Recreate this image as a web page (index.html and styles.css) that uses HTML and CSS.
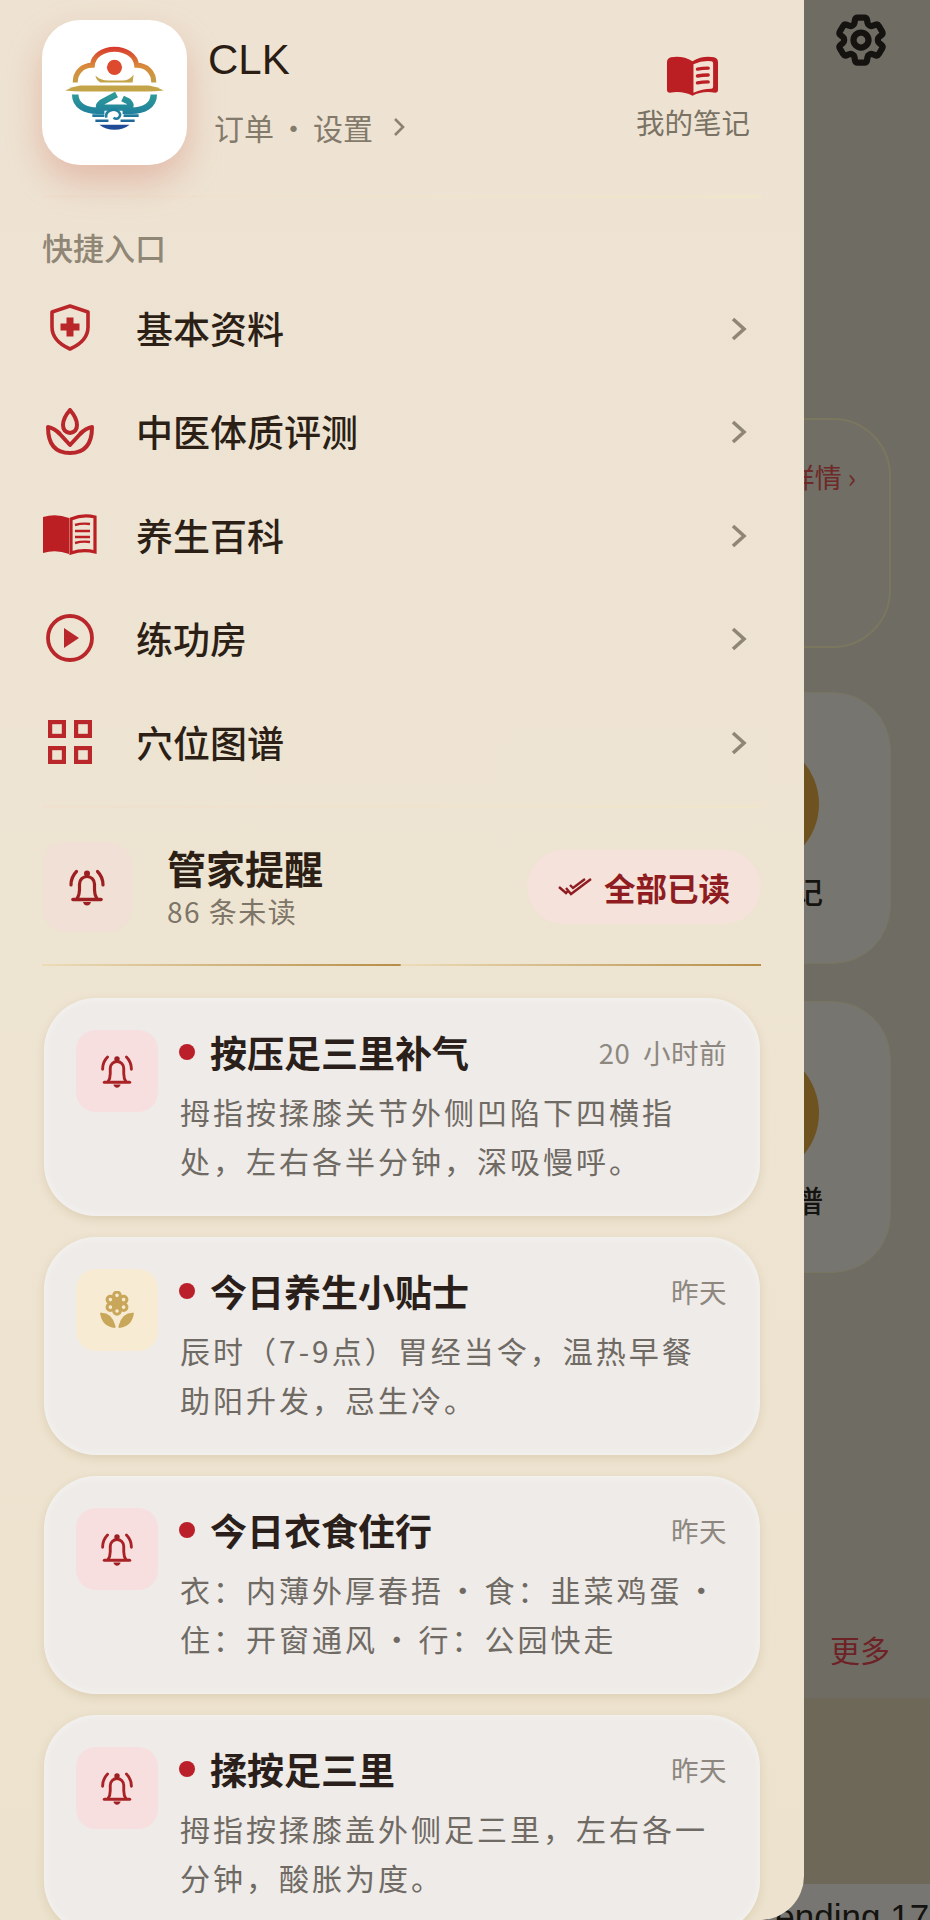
FILE: index.html
```html
<!DOCTYPE html>
<html lang="zh-CN">
<head>
<meta charset="utf-8">
<title>CLK</title>
<link rel="stylesheet" href="styles.css">
</head>
<body>
<div class="screen">

<!-- page behind the drawer -->
<div class="behind">
	<div class="behind-top">
		<svg class="gear" viewBox="0 0 24 24" fill="none" stroke="#14130f" stroke-width="2.5">
			<path d="M9.594 3.94c.09-.542.56-.94 1.11-.94h2.593c.55 0 1.02.398 1.11.94l.213 1.281c.063.374.313.686.645.87.074.04.147.083.22.127.325.196.72.257 1.075.124l1.217-.456a1.125 1.125 0 0 1 1.37.49l1.296 2.247a1.125 1.125 0 0 1-.26 1.431l-1.003.827c-.293.241-.438.613-.43.992a7.723 7.723 0 0 1 0 .255c-.008.378.137.75.43.991l1.004.827c.424.35.534.955.26 1.43l-1.298 2.247a1.125 1.125 0 0 1-1.369.491l-1.217-.456c-.355-.133-.75-.072-1.076.124a6.47 6.47 0 0 1-.22.128c-.331.183-.581.495-.644.869l-.213 1.281c-.09.543-.56.94-1.11.94h-2.594c-.55 0-1.019-.398-1.11-.94l-.213-1.281c-.062-.374-.312-.686-.644-.87a6.52 6.52 0 0 1-.22-.127c-.325-.196-.72-.257-1.076-.124l-1.217.456a1.125 1.125 0 0 1-1.369-.49l-1.297-2.247a1.125 1.125 0 0 1 .26-1.431l1.004-.827c.292-.24.437-.613.43-.991a6.932 6.932 0 0 1 0-.255c.007-.38-.138-.751-.43-.992l-1.004-.827a1.125 1.125 0 0 1-.26-1.43l1.297-2.247a1.125 1.125 0 0 1 1.37-.491l1.216.456c.356.133.751.072 1.076-.124.072-.044.146-.086.22-.128.332-.183.582-.495.644-.869l.214-1.28Z"/>
			<circle cx="12" cy="12" r="3"/>
		</svg>
	</div>
	<div class="bcard bcard-detail"><span class="detail-link">详情 ›</span></div>
	<div class="bcard bcard-tool">
		<span class="tool-dot"></span>
		<span class="tool-name">记</span>
	</div>
	<div class="bcard bcard-tool bcard-last">
		<span class="tool-dot"></span>
		<span class="tool-name">谱</span>
	</div>
	<div class="more-row"><span class="more-link">更多</span></div>
	<div class="behind-band"></div>
	<div class="behind-foot">Pending 17</div>
</div>

<!-- drawer -->
<aside class="drawer">
	<header class="profile">
		<div class="logo-card">
			<svg class="logo" viewBox="0 0 144 144" fill="none">
				<defs>
					<linearGradient id="warm" x1="0" y1="26" x2="0" y2="66" gradientUnits="userSpaceOnUse">
						<stop offset="0" stop-color="#d8342c"/>
						<stop offset=".5" stop-color="#d98a3a"/>
						<stop offset="1" stop-color="#bfa24a"/>
					</linearGradient>
					<linearGradient id="cool" x1="0" y1="72" x2="0" y2="108" gradientUnits="userSpaceOnUse">
						<stop offset="0" stop-color="#2f9d97"/>
						<stop offset=".6" stop-color="#1f7f9d"/>
						<stop offset="1" stop-color="#1f4a96"/>
					</linearGradient>
				</defs>
				<path d="M33 62C33 52 40 45 50 45C51 35 61 29 72 29C83 29 93 35 94 45C104 45 111 52 111 62" stroke="url(#warm)" stroke-width="5"/>
				<circle cx="72" cy="47" r="7.5" fill="#dd4a2e"/>
				<path d="M53 55Q58 60 66 60H80Q87 60 91 54L90 62H58Q54 60 53 55Z" fill="#c4a448"/>
				<path d="M23 70Q30 66 38 65H106Q114 66 121 70Q112 71 104 71H40Q32 71 23 70Z" fill="#c4a448"/>
				<path d="M33 74C33 85 43 90 55 90H62M111 74C111 85 101 90 89 90H80" stroke="url(#cool)" stroke-width="6.5"/>
				<path d="M74 74L59 82Q53 87 61 87H84Q91 86 86 81L80 78" stroke="url(#cool)" stroke-width="6"/>
				<path d="M64 97C62 90 72 87 76 91C80 95 75 100 71 97" stroke="#1f7f9d" stroke-width="2.5"/>
				<path d="M50 95H62M81 95H96M53 100H66M78 100H92" stroke="url(#cool)" stroke-width="2.6"/>
				<path d="M57 104H87Q81 109 72 109Q63 109 57 104Z" fill="#1f4a96"/>
			</svg>
		</div>
		<div class="profile-info">
			<div class="profile-name">CLK</div>
			<div class="profile-links">
				<span>订单</span><span class="sep">·</span><span>设置</span>
				<svg class="links-arrow" viewBox="0 0 12 20" fill="none" stroke="#8b8272" stroke-width="2.6"><path d="M2 2l8 8-8 8"/></svg>
			</div>
		</div>
		<div class="notes">
			<svg class="notes-icon" viewBox="0 0 54 40">
				<path fill="#bb1f24" d="M1 6Q1 2 5 1Q17 -1 27 5Q37 -1 49 1Q53 2 53 6V34Q53 37 50 37Q37 35 27 40Q17 35 4 37Q1 37 1 34Z"/>
				<path fill="#f3e2d4" d="M28 8Q37 4 46 5Q48 5 48 7V31Q48 33 46 33Q37 33 28 37Z"/>
				<path fill="none" stroke="#bb1f24" stroke-width="3.4" stroke-linecap="round" d="M32 13Q37 12 43 12M32 20Q37 19 43 19M32 27Q37 26 43 26"/>
			</svg>
			<span>我的笔记</span>
		</div>
	</header>
	<div class="soft-line"></div>

	<div class="section-label">快捷入口</div>
	<nav class="menu">
		<a class="menu-row">
			<span class="menu-icon">
				<svg width="40" height="47" viewBox="0 0 40 47">
					<path fill="none" stroke="#b9272b" stroke-width="3.6" stroke-linejoin="round" d="M20 2L38 8V23Q38 37 20 45Q2 37 2 23V8Z"/>
					<path fill="#b9272b" d="M16.500 13.500h7v6h6v7h-6v6h-7v-6h-6v-7h6z"/>
				</svg>
			</span>
			<span class="menu-text">基本资料</span>
			<svg class="chev" viewBox="0 0 16 24" fill="none" stroke="#8f8676" stroke-width="3.6"><path d="M2 2l11 10-11 10"/></svg>
		</a>
		<a class="menu-row">
			<span class="menu-icon">
				<svg width="48" height="47" viewBox="0 0 48 47" fill="none" stroke="#b9272b" stroke-width="4" stroke-linejoin="round">
					<path d="M24 2Q31 10 31 17Q31 24 24 25Q17 24 17 17Q17 10 24 2Z"/>
					<path d="M14 26Q8 20 2 19Q2 45 24 45Q46 45 46 19Q40 20 34 26"/>
					<path d="M12 24L24 37L36 24"/>
				</svg>
			</span>
			<span class="menu-text">中医体质评测</span>
			<svg class="chev" viewBox="0 0 16 24" fill="none" stroke="#8f8676" stroke-width="3.6"><path d="M2 2l11 10-11 10"/></svg>
		</a>
		<a class="menu-row">
			<span class="menu-icon">
				<svg width="54" height="41" viewBox="0 0 54 41">
					<path fill="#bb1f24" d="M0 3Q13 -1 26 4V40Q13 35 0 39Z"/>
					<path fill="none" stroke="#bb1f24" stroke-width="3.2" d="M28 5Q40 0 52 3V38Q40 35 28 39Z"/>
					<path fill="none" stroke="#bb1f24" stroke-width="2.4" d="M32 11Q39 9 47 10M32 17H47M32 23H47M32 29Q39 27 47 28"/>
				</svg>
			</span>
			<span class="menu-text">养生百科</span>
			<svg class="chev" viewBox="0 0 16 24" fill="none" stroke="#8f8676" stroke-width="3.6"><path d="M2 2l11 10-11 10"/></svg>
		</a>
		<a class="menu-row">
			<span class="menu-icon">
				<svg width="48" height="48" viewBox="0 0 48 48">
					<circle cx="24" cy="24" r="22" fill="none" stroke="#b9272b" stroke-width="3.8"/>
					<path fill="#b9272b" d="M18 14L33 24L18 34Z"/>
				</svg>
			</span>
			<span class="menu-text">练功房</span>
			<svg class="chev" viewBox="0 0 16 24" fill="none" stroke="#8f8676" stroke-width="3.6"><path d="M2 2l11 10-11 10"/></svg>
		</a>
		<a class="menu-row">
			<span class="menu-icon">
				<svg width="44" height="44" viewBox="0 0 44 44" fill="none" stroke="#b9272b" stroke-width="4.200">
					<rect x="2.100" y="2.100" width="13.800" height="13.800"/>
					<rect x="28.100" y="2.100" width="13.800" height="13.800"/>
					<rect x="2.100" y="28.100" width="13.800" height="13.800"/>
					<rect x="28.100" y="28.100" width="13.800" height="13.800"/>
				</svg>
			</span>
			<span class="menu-text">穴位图谱</span>
			<svg class="chev" viewBox="0 0 16 24" fill="none" stroke="#8f8676" stroke-width="3.6"><path d="M2 2l11 10-11 10"/></svg>
		</a>
	</nav>
	<div class="soft-line soft-line-low"></div>

	<section class="notice-head">
		<span class="head-icon">
			<svg class="bell-big" viewBox="0 0 40 40" fill="none" stroke="#9c1f22">
				<use href="#bell"/>
			</svg>
		</span>
		<div class="head-text">
			<div class="head-title">管家提醒</div>
			<div class="head-sub">86 条未读</div>
		</div>
		<div class="read-all">
			<svg class="checks" viewBox="0 0 34 20" fill="none" stroke="#8e1c20" stroke-width="2.4">
				<path d="M1 10l7 6 3-3M8 11l5 6L33 2M12 8l3 3L27 2"/>
			</svg>
			<span>全部已读</span>
		</div>
	</section>
	<div class="gold-line"></div>

	<svg class="defs-only" width="0" height="0">
		<symbol id="bell" viewBox="0 0 40 40">
			<path fill="none" stroke-width="3.2" stroke-linecap="round" d="M4 18C4 13 6 8 9.500 4.500M36 18C36 13 34 8 30.500 4.500"/>
			<path fill="none" stroke-width="3.2" d="M10 32C12 29 12.500 26 12.500 23V17A7.500 7.500 0 0 1 27.500 17V23C27.500 26 28 29 30 32"/>
			<path fill="none" stroke-width="3.6" stroke-linecap="round" d="M6 32.500H34"/>
			<circle cx="20" cy="6.500" r="3" fill="#9c1f22" stroke="none"/>
			<path fill="#9c1f22" stroke="none" d="M16 35H24Q23 38.500 20 38.500Q17 38.500 16 35Z"/>
		</symbol>
	</svg>

	<div class="notices">
		<article class="notice">
			<span class="notice-icon"><svg class="bell-small" viewBox="0 0 40 40" stroke="#a82226"><use href="#bell"/></svg></span>
			<div class="notice-main">
				<div class="notice-top">
					<span class="dot"></span>
					<span class="notice-title">按压足三里补气</span>
					<span class="notice-time">20 小时前</span>
				</div>
				<p class="notice-body">拇指按揉膝关节外侧凹陷下四横指<br>处，左右各半分钟，深吸慢呼。</p>
			</div>
		</article>
		<article class="notice">
			<span class="notice-icon notice-icon-gold">
				<svg width="34" height="38" viewBox="0 0 36 40">
					<g fill="none" stroke="#c9a75a" stroke-width="3.2">
						<circle cx="18" cy="4.500" r="3.500"/>
						<circle cx="25" cy="9" r="3.500"/>
						<circle cx="25" cy="17" r="3.500"/>
						<circle cx="18" cy="21" r="3.500"/>
						<circle cx="11" cy="17" r="3.500"/>
						<circle cx="11" cy="9" r="3.500"/>
					</g>
					<circle cx="18" cy="13" r="4.500" fill="#c9a75a"/>
					<path fill="#c9a75a" d="M0 23Q12 22 16 36Q17 38 16 39Q2 38 0 23ZM36 23Q24 22 20 36Q19 38 20 39Q34 38 36 23Z"/>
				</svg>
			</span>
			<div class="notice-main">
				<div class="notice-top">
					<span class="dot"></span>
					<span class="notice-title">今日养生小贴士</span>
					<span class="notice-time">昨天</span>
				</div>
				<p class="notice-body">辰时（7-9点）胃经当令，温热早餐<br>助阳升发，忌生冷。</p>
			</div>
		</article>
		<article class="notice">
			<span class="notice-icon"><svg class="bell-small" viewBox="0 0 40 40" stroke="#a82226"><use href="#bell"/></svg></span>
			<div class="notice-main">
				<div class="notice-top">
					<span class="dot"></span>
					<span class="notice-title">今日衣食住行</span>
					<span class="notice-time">昨天</span>
				</div>
				<p class="notice-body notice-body-tight">衣：内薄外厚春捂 · 食：韭菜鸡蛋 ·<br>住：开窗通风 · 行：公园快走</p>
			</div>
		</article>
		<article class="notice">
			<span class="notice-icon"><svg class="bell-small" viewBox="0 0 40 40" stroke="#a82226"><use href="#bell"/></svg></span>
			<div class="notice-main">
				<div class="notice-top">
					<span class="dot"></span>
					<span class="notice-title">揉按足三里</span>
					<span class="notice-time">昨天</span>
				</div>
				<p class="notice-body">拇指按揉膝盖外侧足三里，左右各一<br>分钟，酸胀为度。</p>
			</div>
		</article>
	</div>
</aside>

</div>
</body>
</html>
```

FILE: styles.css
```css
* { box-sizing: border-box; }

html, body {
	margin: 0;
	padding: 0;
	font-family: "Noto Sans CJK SC", "Noto Sans", sans-serif;
}

.screen {
	position: relative;
	width: 930px;
	height: 1920px;
	overflow: hidden;
	background: #6f6c64;
}

/* page behind */
.behind {
	display: flex;
	flex-direction: column;
	height: 1920px;
}
.behind-top {
	height: 418px;
	flex: none;
	padding: 10px 39px 0 0;
	display: flex;
	justify-content: flex-end;
	align-items: flex-start;
}
.gear { width: 60px; height: 60px; }

.bcard {
	margin-left: 635px;
	width: 256px;
	flex: none;
	border-radius: 58px;
}
.bcard-detail {
	height: 230px;
	margin-bottom: 44px;
	padding: 37px 33px 0 0;
	text-align: right;
	background: #706e65;
	border: 2px solid #7b775f;
}
.detail-link { color: #6d2a28; font-size: 27px; line-height: 40px; }
.bcard-tool {
	height: 272px;
	margin-bottom: 37px;
	display: flex;
	flex-direction: column;
	padding: 66px 0 0 53px;
	border: 1px solid #77745f;
	background: #77756f;
}
.tool-dot {
	width: 130px;
	height: 130px;
	margin-top: -20px;
	border-radius: 50%;
	background: #6e5220;
}
.tool-name {
	align-self: flex-end;
	margin: -1px 67px 0 0;
	color: #14130f;
	font-size: 30px;
	font-weight: 500;
	line-height: 44px;
}
.bcard-last { margin-bottom: 0; }

.more-row {
	flex: none;
	height: 425px;
	padding: 0 40px 27px 0;
	display: flex;
	justify-content: flex-end;
	align-items: flex-end;
}
.more-link { color: #6d2226; font-size: 30px; line-height: 44px; }

.behind-band { flex: none; height: 186px; background: #6e6859; }
.behind-foot {
	flex: none;
	height: 37px;
	overflow: hidden;
	padding: 11px 0 0 752px;
	white-space: nowrap;
	background: #777672;
	font-family: "Liberation Sans", sans-serif;
	font-size: 35px;
	line-height: 44px;
	color: #14130f;
}

/* drawer */
.drawer {
	position: absolute;
	left: 0;
	top: 0;
	width: 804px;
	height: 1920px;
	overflow: hidden;
	padding: 20px 43px 0 42px;
	background: linear-gradient(180deg, #eee3d3 0%, #eee4d2 50%, #ece2cd 100%);
	border-bottom-right-radius: 44px;
}

.profile {
	display: flex;
	align-items: flex-start;
	height: 172px;
}
.logo-card {
	width: 145px;
	height: 145px;
	flex: none;
	border-radius: 38px;
	background: #fff;
	box-shadow: 0 16px 36px rgba(200, 90, 70, .3);
}
.logo { display: block; width: 145px; height: 145px; }
.profile-info { margin-left: 21px; }
.profile-name {
	margin-top: 14px;
	font-family: "Liberation Sans", sans-serif;
	font-size: 42px;
	line-height: 52px;
	color: #2a1d14;
}
.profile-links {
	display: flex;
	align-items: center;
	margin: 20px 0 0 6px;
	font-size: 30px;
	line-height: 42px;
	color: #837a6b;
}
.sep { width: 39px; text-align: center; }
.links-arrow { width: 12px; height: 20px; margin-left: 20px; }
.notes {
	margin: 36px 11px 0 auto;
	display: flex;
	flex-direction: column;
	align-items: center;
	font-size: 28.5px;
	line-height: 40px;
	color: #7a7264;
}
.notes-icon { width: 53px; height: 40px; margin-bottom: 6px; }

.soft-line {
	height: 3px;
	background: linear-gradient(90deg, #efe0cf, #efe6cc);
	margin: 3px 0 0;
}
.soft-line-low { margin-top: 11px; }

.section-label {
	margin-top: 31px;
	font-size: 31px;
	font-weight: 500;
	line-height: 36px;
	color: #8f8676;
}

.menu { margin-top: 11px; }
.menu-row {
	display: flex;
	align-items: center;
	height: 103.5px;
}
.menu-icon {
	width: 55px;
	display: flex;
	justify-content: center;
	flex: none;
}
.menu-text {
	margin-left: 39px;
	font-size: 37px;
	font-weight: 500;
	color: #2c1f16;
}
.chev { width: 16px; height: 24px; margin: 2px 14px 0 auto; }

.notice-head {
	display: flex;
	align-items: center;
	height: 90px;
	margin-top: 34px;
}
.head-icon {
	width: 90px;
	height: 90px;
	flex: none;
	border-radius: 24px;
	background: #f1e0d5;
	display: flex;
	align-items: center;
	justify-content: center;
}
.bell-big { width: 40px; height: 40px; }
.bell-small { width: 36px; height: 36px; }
.head-text { margin: -3px 0 0 35px; }
.head-title {
	font-size: 39px;
	font-weight: 700;
	line-height: 52px;
	color: #2c1f16;
}
.head-sub {
	font-size: 28px;
	letter-spacing: 1.500px;
	line-height: 36px;
	color: #7d7567;
}
.read-all {
	margin-left: auto;
	width: 234px;
	height: 74px;
	border-radius: 37px;
	background: #f5e2da;
	display: flex;
	align-items: center;
	justify-content: center;
	gap: 12px;
	font-size: 31.5px;
	font-weight: 700;
	color: #8e1c20;
}
.checks { width: 34px; height: 20px; }

.gold-line {
	height: 2px;
	margin-top: 32px;
	background: linear-gradient(90deg, #ecdcb8 0%, #b78e48 49.8%, #ecdcb8 50%, #b78e48 100%);
}
.defs-only { position: absolute; }

.notices {
	margin: 32px 1px 0 2px;
	display: flex;
	flex-direction: column;
	gap: 21px;
}
.notice {
	display: flex;
	height: 218px;
	flex: none;
	padding: 32px 33px 0 32px;
	border-radius: 52px;
	background: #eeebe8;
	box-shadow: inset 0 0 10px rgba(255, 255, 255, .5), 0 3px 9px rgba(170, 140, 90, .22);
}
.notice-icon {
	width: 82px;
	height: 82px;
	flex: none;
	border-radius: 20px;
	background: #f7dfdf;
	display: flex;
	align-items: center;
	justify-content: center;
}
.notice-icon-gold { background: #f7ebd3; }
.notice-main { margin-left: 21px; flex: 1; min-width: 0; }
.notice-top {
	display: flex;
	align-items: center;
	height: 44px;
}
.dot {
	width: 16px;
	height: 16px;
	flex: none;
	border-radius: 50%;
	background: #bb1f29;
}
.notice-title {
	margin-left: 15px;
	font-size: 37px;
	font-weight: 700;
	color: #2a1f1a;
}
.notice-time {
	margin-left: auto;
	font-size: 27.5px;
	word-spacing: 6px;
	letter-spacing: .5px;
	color: #8d877f;
}
.notice-body {
	margin: 13px 0 0 1px;
	font-size: 30px;
	letter-spacing: 3px;
	line-height: 49px;
	white-space: nowrap;
	color: #6f6a63;
}
.notice-body-tight { word-spacing: -6px; }
```
